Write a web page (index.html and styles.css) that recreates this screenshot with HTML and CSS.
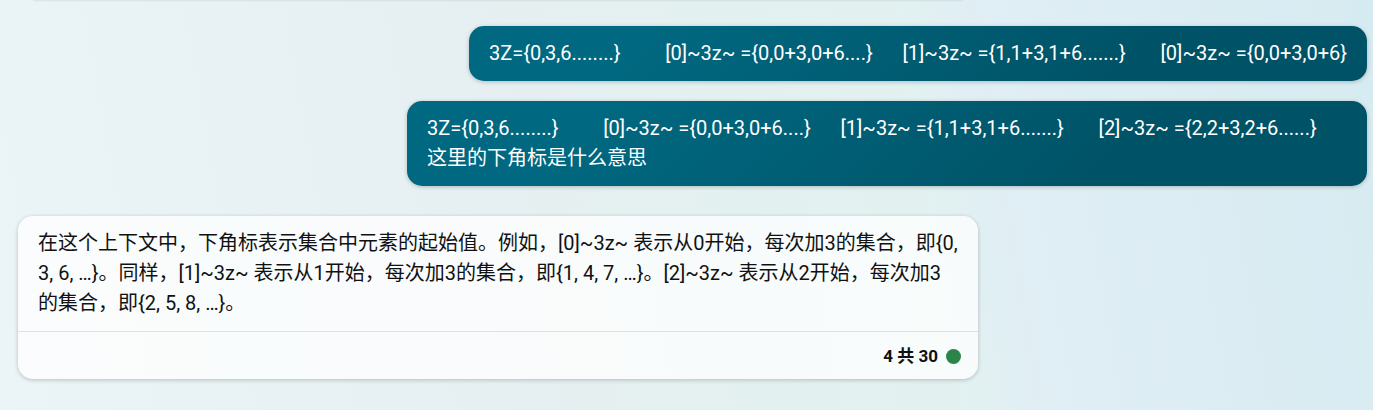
FILE: index.html
```html
<!DOCTYPE html>
<html lang="zh-CN">
<head>
<meta charset="utf-8">
<title>聊天</title>
<link rel="stylesheet" href="styles.css">
</head>
<body>
<div class="previous-edge"></div>
<main class="chat">
  <section class="user-turns">
    <p class="bubble user">3Z={0,3,6........}         [0]~3z~ ={0,0+3,0+6....}      [1]~3z~ ={1,1+3,1+6.......}       [0]~3z~ ={0,0+3,0+6}</p>
    <p class="bubble user">3Z={0,3,6........}         [0]~3z~ ={0,0+3,0+6....}      [1]~3z~ ={1,1+3,1+6.......}       [2]~3z~ ={2,2+3,2+6......}          这里的下角标是什么意思</p>
  </section>
  <article class="answer">
    <p class="answer-text">在这个上下文中，下角标表示集合中元素的起始值。例如，[0]~3z~ 表示从0开始，每次加3的集合，即{0, 3, 6, …}。同样，[1]~3z~ 表示从1开始，每次加3的集合，即{1, 4, 7, …}。[2]~3z~ 表示从2开始，每次加3的集合，即{2, 5, 8, …}。</p>
    <footer class="answer-foot"><span>4 共 30</span><span class="dot"></span></footer>
  </article>
</main>
</body>
</html>
```
FILE: styles.css
```css
* { box-sizing: border-box; }
body {
  margin: 0;
  min-height: 100vh;
  font: 20px/30px Roboto, "Noto Sans CJK SC", sans-serif;
  color: #111;
  background: linear-gradient(80deg, #ebf4f6 0%, #e6eff1 35%, #e2f1f0 66%, #e0eef5 73%, #d6ebf1 100%);
}
p { margin: 0; }
.previous-edge {
  max-width: 928px;
  margin-left: 34px;
  box-shadow: 0 0 2px 1px rgba(0, 0, 0, 0.08);
}
.chat { padding: 26px 6px 30px 18px; }
.user-turns {
  display: flex;
  flex-direction: column;
  align-items: flex-end;
  gap: 20px;
}
.bubble, .answer {
  max-width: 960px;
  border-radius: 15px;
  box-shadow: 0 1px 4px rgba(0, 0, 0, 0.22);
}
.user {
  padding: 12px 20px 13px;
  color: #fff;
  white-space: pre-wrap;
  background: linear-gradient(135deg, #006880 20%, #005266 75%);
}
.answer {
  margin-top: 30px;
  background: rgba(255, 255, 255, 0.75);
}
.answer-text { padding: 12px 20px 13px; }
.answer-foot {
  display: flex;
  justify-content: flex-end;
  align-items: center;
  gap: 8px;
  padding: 9px 17px 8px;
  border-top: 1px solid #dbe0e2;
  font-size: 17px;
  font-weight: 700;
}
.dot {
  width: 15px;
  height: 15px;
  border-radius: 50%;
  background: #2b8548;
}
```
